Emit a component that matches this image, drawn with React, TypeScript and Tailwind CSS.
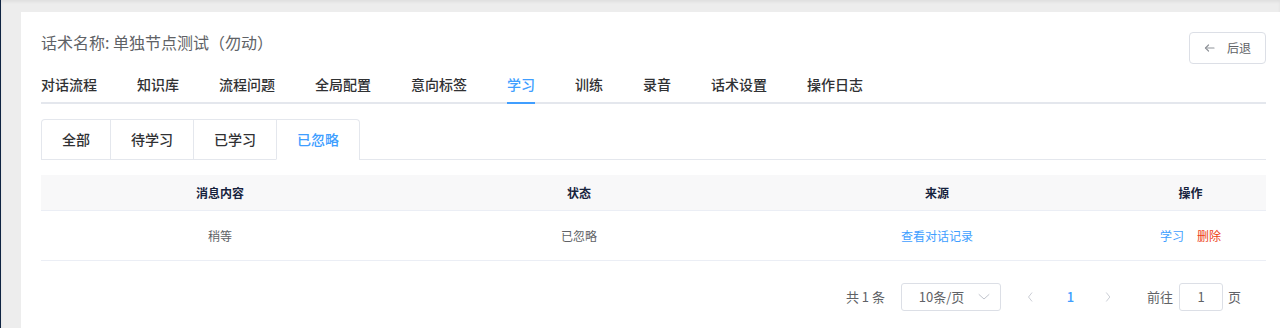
import React from 'react';

const font = { fontFamily: '"Noto Sans CJK SC", "Noto Sans", sans-serif' };

const navTabs = ['对话流程', '知识库', '流程问题', '全局配置', '意向标签', '学习', '训练', '录音', '话术设置', '操作日志'];
const cardTabs = ['全部', '待学习', '已学习', '已忽略'];

function BackArrow() {
  return (
    <svg width="11" height="10" viewBox="0 0 11 10" fill="none" stroke="#909399" strokeWidth="1.2" strokeLinecap="round" strokeLinejoin="round">
      <path d="M10 5H1.5" />
      <path d="M4.5 2 1.5 5l3 3" />
    </svg>
  );
}

function Chevron({ dir }: { dir: 'left' | 'right' | 'down' }) {
  const d = dir === 'left' ? 'M7 1 3 6l4 5' : dir === 'right' ? 'M3 1l4 5-4 5' : 'M1 3.5 6 8l5-4.5';
  return (
    <svg width={dir === 'down' ? 12 : 10} height="12" viewBox="0 0 12 12" fill="none" stroke="#c0c4cc" strokeWidth="1" strokeLinecap="round" strokeLinejoin="round">
      <path d={d} />
    </svg>
  );
}

export default function App() {
  return (
    <div className="flex w-[1280px] h-[328px] overflow-hidden bg-[#ededed]" style={font}>
      <div className="w-[1px] shrink-0 bg-[#0f2442]" />
      <div className="flex-1 pl-[20px] pt-[12px] shadow-[inset_0_2px_3px_rgba(0,0,0,0.06)]">
        <div className="bg-white h-full pl-[20px] pr-[14px] pt-[18px]">
          {/* ─── Header ─── */}
          <div className="flex items-start justify-between h-[34px]">
            <div className="text-[16px] leading-[24px] text-[#606266]">话术名称: 单独节点测试（勿动）</div>
            <button className="mt-[2px] h-[32px] w-[77px] flex items-center justify-center gap-[12px] border border-[#dcdfe6] rounded-[4px] bg-white text-[12px] text-[#606266]">
              <BackArrow />
              <span>后退</span>
            </button>
          </div>

          {/* ─── Main tabs ─── */}
          <div className="flex gap-[40px] h-[40px] shadow-[inset_0_-2px_0_#e4e7ed]">
            {navTabs.map((t) => (
              <div
                key={t}
                className={
                  t === '学习'
                    ? 'h-[40px] flex items-center text-[14px] font-medium text-[#409eff] border-b-2 border-[#409eff] pt-[2px]'
                    : 'h-[40px] flex items-center text-[14px] font-medium text-[#303133] border-b-2 border-transparent pt-[2px]'
                }
              >
                {t}
              </div>
            ))}
          </div>

          {/* ─── Card tabs ─── */}
          <div className="mt-[15px] flex border-b border-[#e4e7ed]">
            <div className="flex border border-b-0 border-[#e4e7ed] rounded-t-[4px] -mb-px">
              {cardTabs.map((t, i) => (
                <div
                  key={t}
                  className={
                    (i > 0 ? 'border-l ' : '') +
                    (t === '已忽略'
                      ? 'h-[40px] px-[20px] flex items-center border-b border-[#e4e7ed] border-b-white text-[14px] font-medium text-[#409eff]'
                      : 'h-[40px] px-[20px] flex items-center border-b border-[#e4e7ed] text-[14px] font-medium text-[#303133]')
                  }
                >
                  {t}
                </div>
              ))}
            </div>
          </div>

          {/* ─── Table ─── */}
          <div className="mt-[15px] text-[12px]">
            <div className="grid grid-cols-[358px_360px_356px_1fr] h-[36px] bg-[#f8f8f9] border-b border-[#ebeef5] font-bold text-[#17233d]">
              <div className="flex items-center justify-center">消息内容</div>
              <div className="flex items-center justify-center">状态</div>
              <div className="flex items-center justify-center">来源</div>
              <div className="flex items-center justify-center">操作</div>
            </div>
            <div className="grid grid-cols-[358px_360px_356px_1fr] h-[50px] border-b border-[#ebeef5] text-[#606266]">
              <div className="flex items-center justify-center">稍等</div>
              <div className="flex items-center justify-center">已忽略</div>
              <div className="flex items-center justify-center text-[#409eff]">查看对话记录</div>
              <div className="flex items-center justify-center gap-[13px]">
                <span className="text-[#409eff]">学习</span>
                <span className="text-[#ed4014]">删除</span>
              </div>
            </div>
          </div>

          {/* ─── Pagination ─── */}
          <div className="mt-[22px] flex items-center justify-end pr-[25px] text-[13px] text-[#606266]">
            <span>共 1 条</span>
            <div className="ml-[16px] w-[100px] h-[28px] flex items-center border border-[#dcdfe6] rounded-[3px]">
              <span className="flex-1 text-center pl-[6px]">10条/页</span>
              <span className="w-[25px] flex items-center justify-center pr-[6px]">
                <Chevron dir="down" />
              </span>
            </div>
            <div className="ml-[11px] flex items-center">
              <span className="w-[39px] flex justify-center"><Chevron dir="left" /></span>
              <span className="w-[39px] text-center text-[#409eff] font-medium">1</span>
              <span className="w-[39px] flex justify-center"><Chevron dir="right" /></span>
            </div>
            <span className="ml-[18px]">前往</span>
            <div className="ml-[6px] w-[44px] h-[28px] flex items-center justify-center border border-[#dcdfe6] rounded-[3px]">1</div>
            <span className="ml-[5px]">页</span>
          </div>
        </div>
      </div>
    </div>
  );
}
